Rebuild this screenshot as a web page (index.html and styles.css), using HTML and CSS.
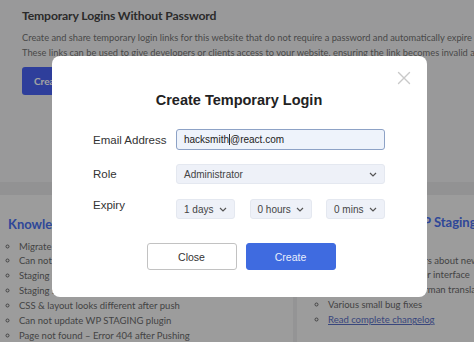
FILE: index.html
```html
<!DOCTYPE html>
<html lang="en">
<head>
<meta charset="utf-8">
<title>Temporary Logins</title>
<link rel="stylesheet" href="styles.css">
</head>
<body>
<div class="page">
  <section class="intro">
    <h1 class="intro-title">Temporary Logins Without Password</h1>
    <p class="intro-text">Create and share temporary login links for this website that do not require a password and automatically expire after a specific period of time.<br>These links can be used to give developers or clients access to your website, ensuring the link becomes invalid after the time is over.</p>
    <button class="btn-new">Create New Login</button>
  </section>
  <div class="band"></div>
  <div class="cards">
    <section class="card card-kb">
      <h2 class="card-title">Knowledge Base</h2>
      <ul class="card-list">
        <li>Migrate WordPress to another host or domain</li>
        <li>Can not login to staging site</li>
        <li>Staging site redirects to production site</li>
        <li>Staging site returns blank white page</li>
        <li>CSS &amp; layout looks different after push</li>
        <li>Can not update WP STAGING plugin</li>
        <li>Page not found – Error 404 after Pushing</li>
      </ul>
    </section>
    <section class="card card-news">
      <h2 class="card-title news-title">What's New in WP Staging</h2>
      <ul class="card-list news-list">
        <li>New: Notify all site users about new</li>
        <li>Improved: A cleaner user interface</li>
        <li>New: Add complete German translation</li>
        <li>Various small bug fixes</li>
        <li><a class="news-link" href="#">Read complete changelog</a></li>
      </ul>
    </section>
  </div>
</div>

<div class="overlay"></div>

<div class="modal">
  <button class="modal-close" aria-label="Close">
    <svg width="14" height="14" viewBox="0 0 14 14"><path d="M1.5 1.5 L12.5 12.5 M12.5 1.5 L1.5 12.5" stroke="#c9c9c9" stroke-width="1.4" fill="none" stroke-linecap="round"/></svg>
  </button>
  <h2 class="modal-title">Create Temporary Login</h2>
  <div class="form">
    <div class="row">
      <label class="label">Email Address</label>
      <div class="field input">hacksmith<span class="caret"></span>@react.com</div>
    </div>
    <div class="row">
      <label class="label">Role</label>
      <div class="field select">
        <span>Administrator</span>
        <svg class="chev" width="8" height="5" viewBox="0 0 8 5"><path d="M1 1 L4 4 L7 1" stroke="#555" stroke-width="1.2" fill="none"/></svg>
      </div>
    </div>
    <div class="row row-expiry">
      <label class="label label-top">Expiry</label>
      <div class="expiry">
        <div class="field select sel-days">
          <span>1 days</span>
          <svg class="chev" width="8" height="5" viewBox="0 0 8 5"><path d="M1 1 L4 4 L7 1" stroke="#555" stroke-width="1.2" fill="none"/></svg>
        </div>
        <div class="field select sel-hours">
          <span>0 hours</span>
          <svg class="chev" width="8" height="5" viewBox="0 0 8 5"><path d="M1 1 L4 4 L7 1" stroke="#555" stroke-width="1.2" fill="none"/></svg>
        </div>
        <div class="field select sel-mins">
          <span>0 mins</span>
          <svg class="chev" width="8" height="5" viewBox="0 0 8 5"><path d="M1 1 L4 4 L7 1" stroke="#555" stroke-width="1.2" fill="none"/></svg>
        </div>
      </div>
    </div>
  </div>
  <div class="actions">
    <button class="btn btn-close">Close</button>
    <button class="btn btn-create">Create</button>
  </div>
</div>
</body>
</html>
```
FILE: styles.css
```css
* { box-sizing: border-box; }
html, body { margin: 0; padding: 0; }
body {
  width: 474px;
  height: 342px;
  overflow: hidden;
  background: #f0f0f1;
  font-family: Lato, "Open Sans", sans-serif;
}
.page { width: 474px; }

.intro {
  padding: 7px 0 0 22px;
  height: 182px;
  white-space: nowrap;
  overflow: hidden;
}
.intro-title {
  margin: 0;
  font-size: 12.2px;
  letter-spacing: -0.15px;
  line-height: 18px;
  font-weight: 700;
  color: #444;
}
.intro-text {
  margin: 4.5px 0 0;
  font-size: 9.3px;
  line-height: 15px;
  color: #727272;
}
.btn-new {
  margin-top: 7.5px;
  height: 28px;
  padding: 0 12px;
  border: 0;
  border-radius: 3px;
  background: #4862f2;
  color: #ffffff;
  font-family: Lato, sans-serif;
  font-size: 10px;
  font-weight: 700;
}
.band { height: 13px; background: #e5e5e6; }

.cards {
  display: grid;
  grid-template-columns: 293px 1fr;
  gap: 4px;
  background: #e8e8e9;
  height: 147px;
}
.card {
  background: #f4f4f5;
  white-space: nowrap;
  overflow: hidden;
}
.card-kb { padding: 20px 0 0 8px; }
.card-news { padding: 18px 0 0 16px; }
.card-title {
  margin: 0;
  font-size: 13px;
  line-height: 18px;
  font-weight: 700;
  color: #4a70ee;
}
.news-title { margin-left: 9px; }
.card-list {
  margin: 6.5px 0 0;
  padding-left: 11px;
  list-style: circle;
  font-size: 9.5px;
  line-height: 14.9px;
  color: #6a6a6a;
}
.news-list { margin-top: 22.5px; padding-left: 15px; }
.news-link { color: #5a6fc4; }

.overlay {
  position: fixed;
  inset: 0;
  background: rgba(0, 0, 0, 0.36);
}

.modal {
  position: fixed;
  left: 52px;
  top: 56px;
  width: 375px;
  height: 241px;
  background: #fff;
  border-radius: 8px;
  padding: 35px 42px 0 41px;
  font-family: "Liberation Sans", Arial, sans-serif;
}
.modal-close {
  position: absolute;
  right: 16px;
  top: 15px;
  width: 14px;
  height: 14px;
  padding: 0;
  border: 0;
  background: none;
  display: flex;
}
.modal-title {
  margin: 0;
  text-align: center;
  font-size: 14.5px;
  line-height: 18px;
  font-weight: 700;
  color: #222;
}
.form {
  margin-top: 20px;
  display: flex;
  flex-direction: column;
  gap: 14px;
}
.row {
  display: flex;
  align-items: center;
}
.row-expiry { align-items: flex-start; margin-top: 1px; }
.label {
  width: 83px;
  flex: none;
  font-size: 11.5px;
  color: #333;
}
.label-top { line-height: 12px; }
.field {
  height: 20px;
  border-radius: 3px;
  font-size: 10px;
  color: #333;
  display: flex;
  align-items: center;
  padding: 0 7px;
}
.input {
  width: 209px;
  height: 21px;
  background: #eef3fb;
  border: 1px solid #8da2c6;
  color: #222;
}
.caret {
  display: inline-block;
  width: 1px;
  height: 11px;
  background: #333;
}
.select {
  background: #eef1f8;
  border: 1px solid #e4e8f0;
  justify-content: space-between;
  color: #444;
}
.form > .row:nth-child(2) .select { width: 209px; }
.chev { flex: none; }
.expiry {
  width: 209px;
  display: flex;
  justify-content: space-between;
}
.sel-days { width: 59px; }
.sel-hours { width: 62px; }
.sel-mins { width: 59px; }

.actions {
  margin-top: 24px;
  display: flex;
  justify-content: center;
  gap: 9px;
  padding-left: 4px;
}
.btn {
  width: 90px;
  height: 27px;
  border-radius: 3px;
  font-family: "Liberation Sans", Arial, sans-serif;
  font-size: 10.5px;
}
.btn-close {
  background: #fff;
  border: 1px solid #c2c2c2;
  color: #333;
}
.btn-create {
  background: #3f6be0;
  border: 1px solid #3f6be0;
  color: #e8eefc;
}
```
